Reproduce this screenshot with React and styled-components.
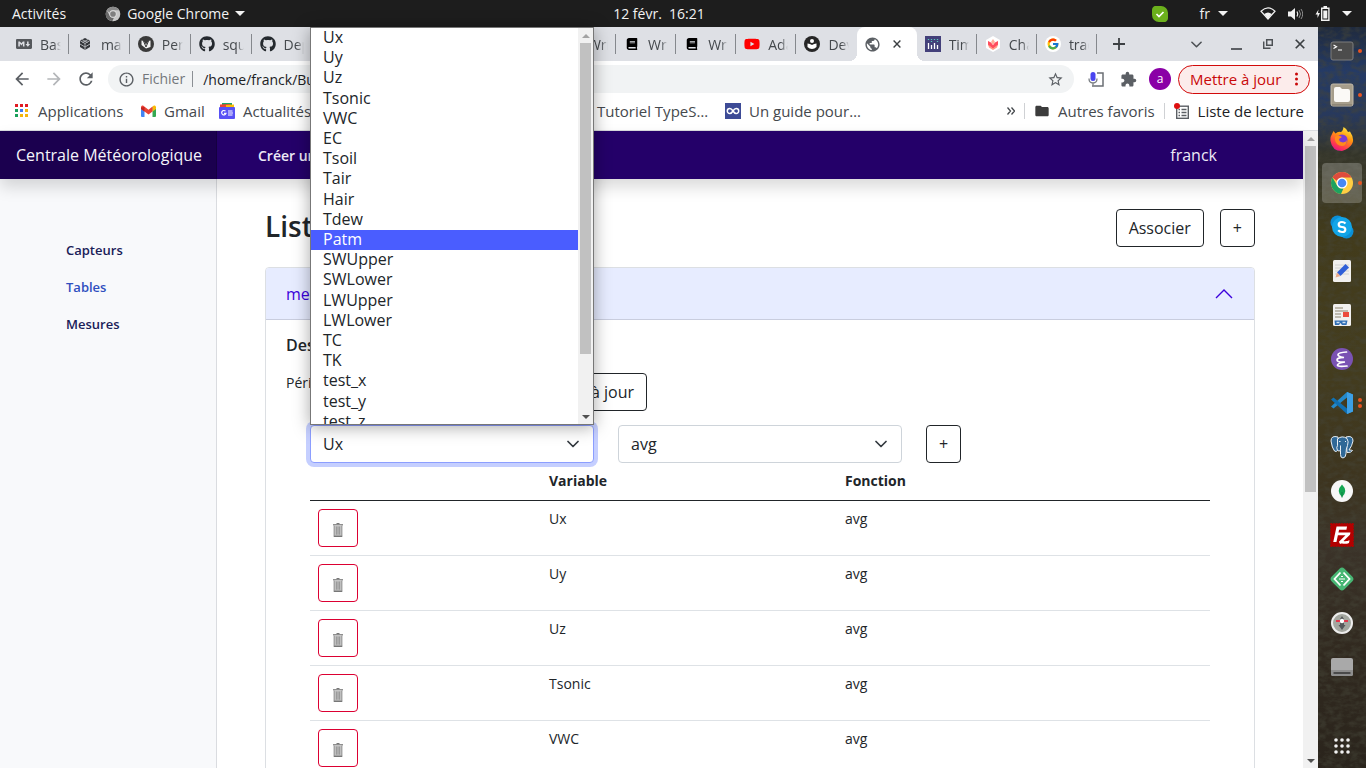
import React from "react";
import styled, { createGlobalStyle, css } from "styled-components";
import { FaMarkdown, FaGithub, FaYoutube, FaBook } from "react-icons/fa";
import { FcGoogle } from "react-icons/fc";
import {
  MdArrowBack,
  MdArrowForward,
  MdRefresh,
  MdInfoOutline,
  MdStarBorder,
  MdExtension,
  MdFolder,
  MdPublic,
} from "react-icons/md";
import { SiFilezilla } from "react-icons/si";

const GlobalStyle = createGlobalStyle`
  *, *::before, *::after { box-sizing: border-box; }
  body { margin: 0; }
  body, button, input, select {
    font-family: "Open Sans", "Noto Sans", sans-serif;
  }
  button { background: none; border: 0; padding: 0; color: inherit; }
  ul { list-style: none; margin: 0; padding: 0; }
  svg { display: block; flex: none; }
`;

/* ---------- desktop ---------- */

const Desktop = styled.div`
  display: flex;
  flex-direction: column;
  height: 100vh;
  overflow: hidden;
  background: #2b261b;
`;

const TopBar = styled.header`
  display: flex;
  align-items: center;
  flex: none;
  height: 27px;
  padding: 0 14px 0 12px;
  background: #1d1d1d;
  color: #f2f2f2;
  font-size: 14px;
  line-height: 20px;
`;

const TopBarLeft = styled.div`
  display: flex;
  align-items: center;
  flex: 1 1 0;
  gap: 39px;
`;

const TopBarButton = styled.button`
  display: flex;
  align-items: center;
  gap: 6px;
  font-size: 14px;
  white-space: nowrap;
`;

const Clock = styled.time`
  margin-right: 46px;
  white-space: pre;
`;

const TopBarRight = styled.div`
  display: flex;
  align-items: center;
  justify-content: flex-end;
  flex: 1 1 0;
  gap: 12px;
`;

const Language = styled.button`
  display: flex;
  align-items: center;
  gap: 8px;
  margin: 0 20px;
  font-size: 14px;
`;

const Workspace = styled.div`
  display: flex;
  flex: 1;
  min-height: 0;
`;

const Browser = styled.div`
  position: relative;
  z-index: 1;
  display: flex;
  flex-direction: column;
  flex: 1;
  min-width: 0;
  background: #fff;
`;

/* ---------- browser chrome ---------- */

const TabStrip = styled.div`
  display: flex;
  flex: none;
  height: 34px;
  padding-left: 8px;
  background: #dee0e5;
`;

const Tabs = styled.div`
  display: flex;
  flex: 1;
  min-width: 0;
`;

const Tab = styled.div`
  position: relative;
  display: flex;
  align-items: center;
  gap: 8px;
  flex: ${(p) => p.$grow} 1 0;
  min-width: 0;
  padding: 0 8px;
  color: #45494d;
  font-size: 14px;
  ${(p) =>
    p.$divided &&
    css`
      &::after {
        content: "";
        position: absolute;
        right: 0;
        top: 7px;
        width: 1px;
        height: 20px;
        background: #85888d;
      }
    `}
  ${(p) =>
    p.$active &&
    css`
      background: #fff;
      border-radius: 8px 8px 0 0;
      &::before,
      &::after {
        content: "";
        position: absolute;
        bottom: 0;
        width: 8px;
        height: 8px;
      }
      &::before {
        right: 100%;
        background: radial-gradient(circle at 0 0, transparent 8px, #fff 8px);
      }
      &::after {
        left: 100%;
        background: radial-gradient(circle at 100% 0, transparent 8px, #fff 8px);
      }
    `}
`;

const TabIcon = styled.span`
  display: flex;
  align-items: center;
  justify-content: center;
  flex: none;
  width: 16px;
  height: 16px;
`;

const TabTitle = styled.span`
  flex: 1;
  min-width: 0;
  overflow: hidden;
  white-space: nowrap;
  mask-image: linear-gradient(to right, #000 65%, transparent);
`;

const TabClose = styled.button`
  display: flex;
  align-items: center;
  justify-content: center;
  width: 16px;
  height: 16px;
  color: #3c4043;
`;

const StripControls = styled.div`
  display: flex;
  align-items: center;
  flex: none;
  width: 221px;
  padding: 0 2px 0 8px;
  color: #3c4043;
`;

const StripButton = styled.button`
  display: flex;
  align-items: center;
  justify-content: center;
  width: ${(p) => (p.$narrow ? 28 : 32)}px;
  height: 28px;
  margin-left: ${(p) => (p.$push ? "auto" : 0)};
  margin-right: ${(p) => (p.$push ? "8px" : 0)};
`;

const Toolbar = styled.div`
  display: flex;
  align-items: center;
  flex: none;
  height: 36px;
  padding: 0 8px 0 6px;
  color: #5b5f64;
`;

const ToolButton = styled.button`
  display: flex;
  align-items: center;
  justify-content: center;
  width: 32px;
  height: 28px;
  color: ${(p) => (p.$dim ? "#b4b6b9" : "#5b5f64")};
`;

const AddressBar = styled.div`
  display: flex;
  align-items: center;
  flex: 1;
  height: 28px;
  margin: 0 6px;
  padding: 0 10px;
  border-radius: 14px;
  background: #f1f3f4;
  font-size: 14px;
`;

const Scheme = styled.span`
  margin: 0 7px;
  padding-right: 7px;
  border-right: 1px solid #8b8f94;
  line-height: 16px;
  color: #73777b;
`;

const AddressInput = styled.input`
  flex: 1;
  min-width: 0;
  border: 0;
  padding: 0 3px;
  background: none;
  color: #202124;
  font-size: 14px;
  outline: none;
`;

const Avatar = styled.button`
  width: 22px;
  height: 22px;
  margin: 0 7px 0 5px;
  border-radius: 50%;
  background: #8a00a6;
  color: #fff;
  font-size: 12px;
  line-height: 20px;
`;

const UpdateButton = styled.button`
  display: flex;
  align-items: center;
  justify-content: space-between;
  width: 132px;
  height: 29px;
  padding: 0 11px;
  border: 1px solid #d20a0a;
  border-radius: 15px;
  background: #fceceb;
  color: #c90808;
  font-size: 15px;
  white-space: nowrap;
`;

const BookmarkBar = styled.nav`
  display: flex;
  align-items: center;
  flex: none;
  height: 34px;
  padding: 0 14px 5px;
  border-bottom: 1px solid #dadce0;
`;

const Bookmark = styled.a`
  display: flex;
  align-items: center;
  gap: 8px;
  flex: none;
  width: ${(p) => (p.$width ? p.$width + "px" : "auto")};
  color: ${(p) => (p.$dark ? "#202124" : "#45494d")};
  font-size: 15px;
  line-height: 20px;
  text-decoration: none;
  white-space: nowrap;
`;

const BookmarkEnd = styled.div`
  display: flex;
  align-items: center;
  gap: 9px;
  margin-left: auto;
  color: #45494d;
`;

const Separator = styled.span`
  width: 1px;
  height: 16px;
  background: #cfd1d4;
`;

/* ---------- page ---------- */

const Viewport = styled.div`
  display: flex;
  flex: 1;
  min-height: 0;
`;

const Page = styled.div`
  display: flex;
  flex-direction: column;
  flex: 1;
  min-width: 0;
  color: #212529;
`;

const PageHeader = styled.header`
  position: relative;
  z-index: 1;
  display: flex;
  align-items: center;
  flex: none;
  height: 48px;
  background: #240069;
  box-shadow: 0 8px 16px rgba(0, 0, 0, 0.15);
`;

const Brand = styled.a`
  display: flex;
  align-items: center;
  flex: none;
  width: 217px;
  height: 48px;
  padding-left: 16px;
  background: #1b004f;
  box-shadow: inset -1px 0 0 #150040;
  color: #f5f4fa;
  font-size: 16px;
  text-decoration: none;
  white-space: nowrap;
`;

const HeaderLink = styled.a`
  margin: ${(p) => (p.$end ? "0 86px 0 auto" : "0 0 0 41px")};
  color: #eceaf6;
  font-size: ${(p) => (p.$end ? 16 : 14)}px;
  font-weight: ${(p) => (p.$end ? 400 : 600)};
  text-decoration: none;
`;

const Columns = styled.div`
  display: flex;
  flex: 1;
  min-height: 0;
`;

const Sidebar = styled.nav`
  display: flex;
  flex-direction: column;
  gap: 16px;
  flex: none;
  width: 217px;
  padding: 61px 16px 0 66px;
  border-right: 1px solid #dadce0;
  background: #f8f9fb;
`;

const SideLink = styled.a`
  color: ${(p) => (p.$active ? "#2f4fbf" : "#1a2058")};
  font-size: 13px;
  font-weight: 600;
  line-height: 21px;
  text-decoration: none;
`;

const Main = styled.main`
  flex: 1;
  min-width: 0;
  padding: 30px 48px 0;
`;

const TitleRow = styled.div`
  display: flex;
  align-items: flex-start;
  gap: 16px;
  margin-bottom: 20px;
`;

const Title = styled.h1`
  flex: 1;
  margin: 0;
  font-size: 28px;
  font-weight: 600;
  line-height: 34px;
`;

const OutlineButton = styled.button`
  height: 38px;
  padding: 0 12px;
  border: 1px solid ${(p) => (p.$danger ? "#dc0032" : "#212529")};
  border-radius: 4px;
  background: #fff;
  color: #212529;
  font-size: 16px;
  white-space: nowrap;
`;

const IconButton = styled(OutlineButton)`
  display: flex;
  align-items: center;
  justify-content: center;
  width: 40px;
  padding: 4px 0 0;
`;

const Accordion = styled.section`
  border: 1px solid #dcdfe3;
  border-radius: 4px;
`;

const AccordionHeader = styled.button`
  display: flex;
  align-items: center;
  justify-content: space-between;
  width: 100%;
  height: 52px;
  padding: 0 21px 0 20px;
  border-bottom: 1px solid #c9cdde;
  border-radius: 3px 3px 0 0;
  background: #e7ecff;
  color: #3c00dc;
  font-size: 16px;
`;

const AccordionBody = styled.div`
  padding: 16px 20px;
`;

const SubTitle = styled.h2`
  margin: 0 0 19px;
  font-size: 16px;
  font-weight: 600;
  line-height: 18px;
`;

const PeriodForm = styled.form`
  display: flex;
  align-items: flex-start;
  gap: 12px;
  width: 361px;
  margin-bottom: 14px;
  font-size: 14px;
  line-height: 20px;
`;

const PeriodInput = styled.input`
  flex: 1;
  min-width: 0;
  height: 38px;
  padding: 0 12px;
  border: 1px solid #ced4da;
  border-radius: 4px;
  font-size: 16px;
`;

const Indent = styled.div`
  padding: 0 24px;
`;

const FieldGrid = styled.div`
  display: grid;
  grid-template-columns: repeat(3, 1fr);
  gap: 24px;
  justify-items: start;
`;

const SelectField = styled.div`
  position: relative;
  width: 100%;
  & > svg {
    position: absolute;
    right: 15px;
    top: 13px;
    pointer-events: none;
  }
`;

const Select = styled.select`
  display: block;
  width: 100%;
  height: 38px;
  padding: 0 12px;
  appearance: none;
  border: 1px solid ${(p) => (p.$focused ? "#8c9eff" : "#ced4da")};
  border-radius: 4px;
  background: #fff;
  box-shadow: ${(p) => (p.$focused ? "0 0 0 4px #c5cfff" : "none")};
  color: #212529;
  font-size: 16px;
  outline: none;
`;

const Popup = styled.div`
  position: absolute;
  left: 0;
  right: 0;
  bottom: 100%;
  z-index: 10;
  display: flex;
  height: 398px;
  overflow: hidden;
  border: 1px solid #777;
  background: #fff;
  box-shadow: 0 2px 16px rgba(0, 0, 0, 0.35);
`;

const OptionList = styled.ul`
  display: flex;
  flex-direction: column;
  flex: 1;
  height: 404px;
`;

const Option = styled.li`
  flex: 1 1 0;
  padding: 0 12px;
  background: ${(p) => (p.$selected ? "#4a5dff" : "#fff")};
  color: ${(p) => (p.$selected ? "#fff" : "#212529")};
  font-size: 16px;
  line-height: 19px;
`;

const ScrollTrack = styled.div`
  display: flex;
  flex-direction: column;
  flex: none;
  width: 15px;
  background: #f1f1f1;
`;

const ScrollArrow = styled.span`
  display: flex;
  align-items: center;
  justify-content: center;
  height: 15px;
  flex: none;
`;

const ScrollRun = styled.div`
  flex: 1;
  min-height: 0;
  padding: 0 2px;
`;

const ScrollThumb = styled.div`
  height: ${(p) => p.$size}%;
  background: #c1c1c1;
`;

const Table = styled.table`
  width: 100%;
  table-layout: fixed;
  border-collapse: separate;
  border-spacing: 0;
  font-size: 14px;
  line-height: 19px;
`;

const HeadCell = styled.th`
  width: ${(p) => (p.$width ? p.$width + "px" : "auto")};
  height: 38px;
  padding: 8px;
  border-bottom: 1px solid #212529;
  text-align: left;
  vertical-align: top;
  font-weight: 700;
`;

const Cell = styled.td`
  height: 55px;
  padding: 8px;
  border-bottom: 1px solid #dee2e6;
  vertical-align: top;
`;

/* ---------- dock ---------- */

const Dock = styled.aside`
  position: relative;
  display: flex;
  flex-direction: column;
  flex: none;
  width: 48px;
  padding-top: 2px;
  background: linear-gradient(
    #1f2a3e 0,
    #253b66 6%,
    #28395c 12%,
    #34352a 17%,
    #423b1b 28%,
    #443d1e 45%,
    #3d341f 62%,
    #3b3329 70%,
    #322a20 82%,
    #2a241c 100%
  );
`;

const Grain = styled.svg`
  position: absolute;
  inset: 0;
  width: 100%;
  height: 100%;
  opacity: 0.5;
`;

const DockItem = styled.button`
  position: relative;
  display: flex;
  align-items: center;
  justify-content: center;
  flex: none;
  height: 40px;
  margin: 2px 4px;
  margin-top: ${(p) => (p.$last ? "auto" : "2px")};
  border-radius: 4px;
  background: ${(p) => (p.$active ? "rgba(255,255,255,0.22)" : "none")};
`;

const Dots = styled.span`
  position: absolute;
  right: 0;
  top: 0;
  bottom: 0;
  display: flex;
  flex-direction: column;
  justify-content: center;
  gap: 2px;
  &::before,
  &::after {
    content: "";
    width: 4px;
    height: 4px;
    border-radius: 50%;
    background: #e95420;
  }
  &::after {
    display: ${(p) => (p.$count > 1 ? "block" : "none")};
  }
`;

/* ---------- drawings ---------- */

const Caret = ({ size = 10, color = "#f2f2f2", up }) => (
  <svg width={size} height={size / 2} viewBox="0 0 10 5">
    <path d={up ? "M0 5h10L5 0z" : "M0 0h10L5 5z"} fill={color} />
  </svg>
);

const Chevron = ({ color = "#343a40", w = 12 }) => (
  <svg width={w} height={w} viewBox="0 0 12 12" fill="none">
    <path d="M1 3.500l5 5 5-5" stroke={color} strokeWidth="1.700" strokeLinecap="round" strokeLinejoin="round" />
  </svg>
);

const Cross = ({ size = 8 }) => (
  <svg width={size} height={size} viewBox="0 0 8 8">
    <path d="M.6.6l6.800 6.800M7.400.6L.6 7.400" stroke="currentColor" strokeWidth="1.400" />
  </svg>
);

const ChromeLogo = ({ size, gray }) => {
  const c = gray ? ["#8a8a8a", "#6a6a6a", "#c9c9c9", "#808080", "#ddd"] : ["#dd4b3e", "#1da260", "#ffce43", "#4688f4", "#fff"];
  return (
    <svg width={size} height={size} viewBox="0 0 48 48">
      <circle cx="24" cy="24" r="22" fill={c[2]} />
      <path d="M24 2a22 22 0 0 1 19 11H24a11 11 0 0 0-10 7L5 13A22 22 0 0 1 24 2z" fill={c[0]} />
      <path d="M5 13l9.500 16.500a11 11 0 0 0 12.500 5L22 46A22 22 0 0 1 5 13z" fill={c[1]} />
      <circle cx="24" cy="24" r="11" fill={c[4]} />
      <circle cx="24" cy="24" r="8.500" fill={c[3]} />
    </svg>
  );
};

const Cube = () => (
  <svg width="14" height="14" viewBox="0 0 14 14">
    <path d="M7 1l5 2.500v6.500L7 13 2 10V3.500z" fill="#33363a" />
    <path d="M2 3.500l5 3 5-3M7 6.500V13M4 2.500l5.500 3M10 2.500l-5.500 3M2 7l5 3 5-3" stroke="#b9bbc0" strokeWidth=".900" fill="none" />
  </svg>
);

const RoundMark = () => (
  <svg width="16" height="16" viewBox="0 0 16 16">
    <circle cx="8" cy="8" r="8" fill="#3a3a3a" />
    <path d="M3.500 4.500L5.500 5 8 8.500 10.500 5l2-.500V11L8 12.500 3.500 9z" fill="#f2f2f2" />
    <path d="M5.500 5L8 11l2.500-6" stroke="#3a3a3a" fill="none" />
  </svg>
);

const Reader = () => (
  <svg width="16" height="16" viewBox="0 0 16 16">
    <circle cx="8" cy="8" r="8" fill="#262626" />
    <circle cx="8" cy="5" r="2" fill="#fff" />
    <path d="M3.500 7.500Q6 7.500 8 9q2-1.500 4.500-1.500V11Q10.500 13 8 13t-4.500-2z" fill="#fff" />
  </svg>
);

const Chart = () => (
  <svg width="16" height="16" viewBox="0 0 16 16">
    <path d="M0 0h16v16H0z" fill="#43407a" />
    <path d="M3.500 7v6M6.500 9v4M9.500 7v6M12.500 9v4" stroke="#fff" strokeWidth="1.300" />
    <path d="M3.500 3v2M6.500 3v4M9.500 3v2M12.500 3v4" stroke="#59c9bd" strokeWidth="1.300" strokeDasharray="1 1" />
  </svg>
);

const Challenge = () => (
  <svg width="16" height="16" viewBox="0 0 16 16">
    <path d="M8 0l7 4v8l-7 4-7-4V4z" fill="#fff" />
    <path d="M3 5l3 1.500L8 9l2-2.500L13 5v4l-5 4-5-4z" fill="#ff4d5e" />
    <path d="M3 8.500l5 4 5-4-1 3-4 2.500-4-2.500z" fill="#ff9a85" />
    <path d="M6 6l2-3 2 3-2 3z" fill="#ffb09c" />
  </svg>
);

const GoogleTab = () => (
  <svg width="16" height="16" viewBox="0 0 16 16">
    <circle cx="8" cy="8" r="8" fill="#fff" />
    <g transform="translate(1.500 1.500)">
      <FcGoogle size={13} />
    </g>
  </svg>
);

const AppsGrid = () => (
  <svg width="16" height="14" viewBox="0 0 16 14">
    {["#e11b22", "#e11b22", "#e11b22", "#18a05a", "#3f7bf2", "#f5b60a", "#18a05a", "#f5b60a", "#f5b60a"].map((c, i) => (
      <rect key={i} x={1 + (i % 3) * 5} y={Math.floor(i / 3) * 5} width="3" height="3" fill={c} />
    ))}
  </svg>
);

const Gmail = () => (
  <svg width="15" height="12" viewBox="0 0 15 12">
    <path d="M0 2h3.500v10H1q-1 0-1-1z" fill="#4285f4" />
    <path d="M11.500 2H15v9q0 1-1 1h-2.500z" fill="#34a853" />
    <path d="M11.500 1.500L13 .500q2-.500 2 2V4l-3.500 2.600z" fill="#fbbc04" />
    <path d="M0 4V2.500Q0 0 2 .500l5.500 4.200 4-3.200v5.100l-4 3-4-3z" fill="#ea4335" />
    <path d="M0 2.500V4l3.500 2.600V2z" fill="#c5221f" />
  </svg>
);

const News = () => (
  <svg width="16" height="16" viewBox="0 0 16 16">
    <path d="M3 0h10v4H3z" fill="#1fa463" />
    <path d="M1 1.500l10-.500 3 3H1z" fill="#ea4335" />
    <path d="M7 2l8-.500V5H7z" fill="#fbbc04" />
    <rect y="4" width="16" height="12" rx="1" fill="#5851f5" />
    <path d="M6.500 8.200A2.200 2.200 0 1 0 7 10.300H5M9 8h4.500M9 10h5M9 12h4.500" stroke="#fff" strokeWidth="1.200" fill="none" />
  </svg>
);

const LoopLogo = () => (
  <svg width="16" height="16" viewBox="0 0 16 16">
    <path d="M0 0h16v16H0z" fill="#3d4b96" />
    <path d="M8 8C6.500 5.500 5.500 5.500 4.800 5.500a2.500 2.500 0 0 0 0 5C5.500 10.500 6.500 10.500 8 8s2.500-2.500 3.200-2.500a2.500 2.500 0 0 1 0 5C10.500 10.500 9.500 10.500 8 8z" stroke="#fff" strokeWidth="1.500" fill="none" />
  </svg>
);

const ReadingList = () => (
  <svg width="16" height="17" viewBox="1 0 16 17">
    <rect x="3.700" y="3.200" width="11.600" height="12.100" fill="none" stroke="#5b5f64" strokeWidth="1.400" />
    <path d="M5.500 6.500h1.500M5.500 9.500h1.500M5.500 12.500h1.500M8.500 6.500h5M8.500 9.500h5M8.500 12.500h5" stroke="#5b5f64" strokeWidth="1.300" />
    <circle cx="4" cy="3" r="3" fill="#de0f0f" />
  </svg>
);

const VoicePad = () => (
  <svg width="16" height="17" viewBox="0 0 16 17">
    <path d="M9 2h6v13H4" fill="none" stroke="#6b6f74" strokeWidth="1.500" />
    <rect x="2.500" y="1" width="5" height="9" rx="2.500" fill="#4a45f0" />
    <path d="M1 7.500Q1 12 5 12t4-4.500M5 12v2.500" fill="none" stroke="#7a7e83" strokeWidth="1.300" />
  </svg>
);

const Trash = () => (
  <svg width="10" height="14" viewBox="0 0 10 14">
    <path d="M3.500 0h3v1.200h-3z" fill="#777" />
    <path d="M0 1h10v1.500H0z" fill="#8f8f8f" />
    <path d="M.700 2.500h8.600v10.200H.700z" fill="#c4c4c4" />
    <path d="M1.200 2.500v10.200M3.400 3.500v8.200M5 3.500v8.200M6.600 3.500v8.200M8.800 2.500v10.200" stroke="#8a8a8a" strokeWidth=".800" />
    <path d="M.700 12.500h8.600V14H.700z" fill="#777" />
  </svg>
);

const SkypeStatus = () => (
  <svg width="16" height="16" viewBox="0 0 16 16">
    <path d="M0 4a4 4 0 0 1 5-4h4a7 7 0 0 1 7 7v5a4 4 0 0 1-5 4H7a7 7 0 0 1-7-7z" fill="#6bb01c" />
    <path d="M4.500 8l2.500 2.500L11.500 6" stroke="#fff" strokeWidth="1.700" fill="none" />
  </svg>
);

const Wifi = () => (
  <svg width="16" height="13" viewBox="0 0 16 13">
    <path d="M1 4.200Q8-2.500 15 4.200L8 12z" fill="none" stroke="#f2f2f2" strokeWidth="1.200" />
    <path d="M4.200 7Q8 4 11.800 7L8 12z" fill="#f2f2f2" />
  </svg>
);

const Speaker = () => (
  <svg width="15" height="12" viewBox="0 0 15 12">
    <path d="M0 3.500h3L7 0v12L3 8.500H0z" fill="#f2f2f2" />
    <path d="M9 3.500q1.500 2.500 0 5" stroke="#f2f2f2" fill="none" strokeWidth="1.200" />
    <path d="M11 2q3 4 0 8M13 1q3.500 5 0 10" stroke="#8d8d8d" fill="none" />
  </svg>
);

const Battery = () => (
  <svg width="15" height="15" viewBox="0 0 15 15">
    <path d="M3.500 3.500L.500 8.500h2v3.500L5 7H3z" fill="#f2f2f2" />
    <path d="M6.700 2.200h7.200v12H6.700zM8.500.700h3.500" fill="none" stroke="#f2f2f2" strokeWidth="1.400" />
    <path d="M8.300 4.500h4v8h-4z" fill="#f2f2f2" />
  </svg>
);

const Terminal = () => (
  <svg width="24" height="20" viewBox="0 0 24 20">
    <rect x="1" y="1" width="22" height="18" rx="2" fill="#4c4c4c" stroke="#7c7c7c" />
    <path d="M3.500 4l3 1.700-3 1.700M8 9h4" stroke="#fff" fill="none" strokeWidth="1.200" />
  </svg>
);

const Files = () => (
  <svg width="24" height="24" viewBox="0 0 24 24">
    <rect x="1" y="1" width="22" height="22" rx="2" fill="#a69d8b" stroke="#c2b9a8" />
    <path d="M4 6q0-2 2-2h4l2 2h6q2 0 2 2v9q0 2-2 2H6q-2 0-2-2z" fill="#fbf9f6" />
    <path d="M2 22h20" stroke="#7b7365" />
  </svg>
);

const Firefox = () => (
  <svg width="24" height="24" viewBox="0 0 24 24">
    <defs>
      <linearGradient id="fx" x1=".8" y1="0" x2=".3" y2="1">
        <stop offset="0" stopColor="#fff04a" />
        <stop offset=".4" stopColor="#ff980e" />
        <stop offset=".8" stopColor="#ff3750" />
        <stop offset="1" stopColor="#e31587" />
      </linearGradient>
    </defs>
    <path d="M2 7l1.500-3 2 2.500Q8 4 11 5q2-1 2.500-5 3 1.500 4.500 5l2-.500Q25 12 22 17t-10 7Q2 24 .500 14 0 10 2 7z" fill="url(#fx)" />
    <circle cx="12" cy="13" r="5.500" fill="#7a3bd6" />
    <path d="M5 10q3-2.500 7 0l-3 2q0 3 4 3.500 3-.500 4-2.500Q16.500 19 12 19q-6-.500-7-6z" fill="#ff8a1c" />
  </svg>
);

const Skype = () => (
  <svg width="24" height="24" viewBox="0 0 24 24">
    <circle cx="7.500" cy="7.500" r="7" fill="#0b8fd6" />
    <circle cx="16.500" cy="16.500" r="7" fill="#0b8fd6" />
    <circle cx="12" cy="12" r="10" fill="#12a5e8" />
    <path d="M15.500 8.500Q14 7 12 7q-3.300 0-3.300 2.500T12 12t3.300 2.600T12 17q-2.300 0-3.800-1.700" fill="none" stroke="#fff" strokeWidth="2.200" />
  </svg>
);

const Editor = () => (
  <svg width="20" height="24" viewBox="0 0 20 24">
    <rect x="1" y="1" width="18" height="22" rx="1.500" fill="#f1f0ef" />
    <path d="M3 6h14M3 9h14M3 12h14M3 15h14" stroke="#d2d2d2" />
    <path d="M13.500 5l3.500 3.500-8.500 8.500L5 13.500z" fill="#2f5fd8" />
    <path d="M5 13.500L8.500 17 3.500 18.500z" fill="#e9a98b" />
  </svg>
);

const DocViewer = () => (
  <svg width="20" height="24" viewBox="0 0 20 24">
    <rect x="1" y="1" width="18" height="22" rx="1.500" fill="#f1f0ef" />
    <path d="M3 5h8M3 8h13M3 11h6M3 14h6" stroke="#8d8470" strokeWidth="1.200" />
    <rect x="11" y="9" width="6" height="5" fill="#ec4b3d" />
    <path d="M2.500 17.500h13l-1 4.500h-4.500l-1.500-2-1.500 2H3z" fill="#2f6eb5" />
    <path d="M4.500 19.500h3M10.500 19.500h3" stroke="#cfe0f2" strokeWidth="1.300" />
  </svg>
);

const Emacs = () => (
  <svg width="24" height="24" viewBox="0 0 24 24">
    <circle cx="12" cy="12" r="11" fill="#7a52b3" />
    <path d="M16.500 5Q8.500 5.500 8 7.500t6 3q-7 0-7 2.500t8 2Q8 16 7.500 18t9.500 1" fill="none" stroke="#fff" strokeWidth="1.700" strokeLinecap="round" />
  </svg>
);

const Code = () => (
  <svg width="24" height="24" viewBox="0 0 24 24">
    <path d="M17 1l6 2.500v17L17 23V6.500L3.500 17.500 1 15.500z" fill="#2489ca" />
    <path d="M1 8.500l2.500-2L17 17.500V23z" fill="#1070b3" />
    <path d="M17 1l6 2.500v17L17 23z" fill="#3c9fe6" />
  </svg>
);

const Postgres = () => (
  <svg width="24" height="24" viewBox="0 0 24 24" fill="#2f6897" stroke="#e8eef3" strokeLinejoin="round">
    <path d="M8 2Q1 0 1 6q1 7 3.500 10 1.500 1.500 3.500-1z" />
    <path d="M16 2q7-2 7 4-1 5-4 9 3 0 3.500.500-1.500 2.500-5.500 2z" />
    <path d="M7.500 4Q12 0 17 3.500q2 3 .500 7-1.500 3-1.500 8 0 4-3 4.500-2.500 0-2.500-3.500v-4q-1.500 1-3 0-1.500-3 0-5z" />
    <path d="M10.500 15.500v-5M9 6.500h1.500M15 6.500h1" fill="none" />
  </svg>
);

const Mongo = () => (
  <svg width="22" height="22" viewBox="0 0 22 22">
    <circle cx="11" cy="11" r="11" fill="#f7f7f7" />
    <path d="M11 4.500q6.500 6.500 0 12.500-6.500-6 0-12.500z" fill="#13a552" />
    <path d="M11 12v5.500" stroke="#0d8040" />
  </svg>
);

const FileZillaTile = styled.span`
  display: flex;
  align-items: center;
  justify-content: center;
  width: 22px;
  height: 22px;
  background: #fff;
`;

const FileZilla = () => (
  <FileZillaTile>
    <SiFilezilla size={24} color="#b30000" />
  </FileZillaTile>
);

const CodeDiamond = () => (
  <svg width="24" height="24" viewBox="0 0 24 24">
    <rect x="3" y="3" width="18" height="18" rx="3.500" fill="#48b674" transform="rotate(45 12 12)" />
    <path d="M10.500 5.500L4.500 12l6 6.500M13.500 5.500l6 6.500-6 6.500" fill="none" stroke="#fff" strokeWidth="1.800" />
    <path d="M9 12h6M11 9.500h2M11 14.500h2" stroke="#fff" strokeWidth="1.200" />
  </svg>
);

const Drone = () => (
  <svg width="24" height="24" viewBox="0 0 24 24">
    <circle cx="12" cy="12" r="10" fill="#a3a69f" stroke="#ededed" strokeWidth="2" />
    <path d="M12 5l2 3v6h1.500L12 19l-3.500-5H10V8z" fill="#55585a" />
    <path d="M6 10h12" stroke="#e0354a" strokeWidth="2" />
    <circle cx="12" cy="10" r="2.200" fill="#fff" />
  </svg>
);

const Drive = () => (
  <svg width="24" height="20" viewBox="0 0 24 20">
    <rect x="1" y="1" width="22" height="18" rx="2" fill="#a9a9a9" />
    <path d="M1 13h22v4q0 2-2 2H3q-2 0-2-2z" fill="#8e8e8e" />
    <path d="M3.500 16h17" stroke="#4a4a4a" strokeWidth="2" />
  </svg>
);

const AllApps = () => (
  <svg width="16" height="16" viewBox="0 0 16 16">
    {[...Array(9)].map((_, i) => (
      <circle key={i} cx={2 + (i % 3) * 6} cy={2 + Math.floor(i / 3) * 6} r="1.800" fill="#f2f2f2" />
    ))}
  </svg>
);

/* ---------- data ---------- */

const github = <FaGithub size={16} color="#24292e" />;
const book = <FaBook size={12} color="#000" />;

const TABS = [
  { title: "Base", icon: <FaMarkdown size={16} color="#55585c" /> },
  { title: "matplotlib", icon: <Cube /> },
  { title: "Personnel", icon: <RoundMark /> },
  { title: "squelette", icon: github },
  { title: "Deploy", icon: github },
  { title: "Docs", icon: book },
  { title: "Docs", icon: book },
  { title: "Docs", icon: book },
  { title: "Docs", icon: book },
  { title: "Writing", icon: book },
  { title: "Writing", icon: book },
  { title: "Writing", icon: book },
  { title: "Adapter", icon: <FaYoutube size={16} color="#f00" /> },
  { title: "Devenir", icon: <Reader />, beforeActive: true },
  { title: "", icon: <MdPublic size={17} color="#5b5f64" />, active: true },
  { title: "Time series", icon: <Chart /> },
  { title: "Charts", icon: <Challenge /> },
  { title: "traduction", icon: <GoogleTab /> },
];

const OPTIONS = [
  "Ux", "Uy", "Uz", "Tsonic", "VWC", "EC", "Tsoil", "Tair", "Hair", "Tdew",
  "Patm", "SWUpper", "SWLower", "LWUpper", "LWLower", "TC", "TK", "test_x", "test_y", "test_z",
];

const ROWS = ["Ux", "Uy", "Uz", "Tsonic", "VWC"];

const DOCK = [
  { name: "Terminal", icon: <Terminal />, dots: 1 },
  { name: "Fichiers", icon: <Files />, dots: 1 },
  { name: "Firefox", icon: <Firefox /> },
  { name: "Google Chrome", icon: <ChromeLogo size={24} />, dots: 1, active: true },
  { name: "Skype", icon: <Skype /> },
  { name: "Éditeur de texte", icon: <Editor /> },
  { name: "Visionneur de documents", icon: <DocViewer /> },
  { name: "Emacs", icon: <Emacs /> },
  { name: "Visual Studio Code", icon: <Code />, dots: 2 },
  { name: "PostgreSQL", icon: <Postgres /> },
  { name: "MongoDB", icon: <Mongo /> },
  { name: "FileZilla", icon: <FileZilla /> },
  { name: "Éditeur de code", icon: <CodeDiamond /> },
  { name: "QGroundControl", icon: <Drone /> },
  { name: "Disque", icon: <Drive /> },
];

const Scrollbar = ({ size }) => (
  <ScrollTrack aria-hidden="true">
    <ScrollArrow><Caret size={8} color="#a3a3a3" up /></ScrollArrow>
    <ScrollRun><ScrollThumb $size={size} /></ScrollRun>
    <ScrollArrow><Caret size={8} color="#505050" /></ScrollArrow>
  </ScrollTrack>
);

export default function App() {
  return (
    <Desktop>
      <GlobalStyle />
      <TopBar>
        <TopBarLeft>
          <TopBarButton>Activités</TopBarButton>
          <TopBarButton>
            <ChromeLogo size={16} gray />
            Google Chrome
            <Caret />
          </TopBarButton>
        </TopBarLeft>
        <Clock>{"12 févr.  16:21"}</Clock>
        <TopBarRight>
          <SkypeStatus />
          <Language>fr <Caret /></Language>
          <Wifi />
          <Speaker />
          <Battery />
          <Caret />
        </TopBarRight>
      </TopBar>

      <Workspace>
        <Browser>
          <TabStrip>
            <Tabs>
              {TABS.map((t, i) => (
                <Tab key={i} $grow={i < 9 ? 61 : 60} $active={t.active} $divided={!t.active && !t.beforeActive}>
                  <TabIcon>{t.icon}</TabIcon>
                  {t.active ? (
                    <TabClose aria-label="Fermer l’onglet"><Cross /></TabClose>
                  ) : (
                    <TabTitle>{t.title}</TabTitle>
                  )}
                </Tab>
              ))}
            </Tabs>
            <StripControls>
              <StripButton $narrow aria-label="Nouvel onglet">
                <svg width="12" height="12" viewBox="0 0 12 12"><path d="M6 0v12M0 6h12" stroke="currentColor" strokeWidth="1.800" /></svg>
              </StripButton>
              <StripButton $push aria-label="Rechercher des onglets"><Chevron color="#4d5155" w={11} /></StripButton>
              <StripButton aria-label="Réduire">
                <svg width="11" height="11" viewBox="0 0 11 11"><path d="M0 10h11" stroke="#4d5155" strokeWidth="1.800" /></svg>
              </StripButton>
              <StripButton aria-label="Restaurer">
                <svg width="10" height="10" viewBox="0 0 10 10" fill="none" stroke="#4d5155" strokeWidth="1.500">
                  <path d="M3.700.700h5.600v5.600H3.700zM.700 2.500v6.800H7.500" />
                </svg>
              </StripButton>
              <StripButton aria-label="Fermer"><Cross size={10} /></StripButton>
            </StripControls>
          </TabStrip>

          <Toolbar>
            <ToolButton aria-label="Retour"><MdArrowBack size={20} /></ToolButton>
            <ToolButton $dim aria-label="Avancer"><MdArrowForward size={20} /></ToolButton>
            <ToolButton aria-label="Actualiser"><MdRefresh size={20} /></ToolButton>
            <AddressBar>
              <MdInfoOutline size={17} />
              <Scheme>Fichier</Scheme>
              <AddressInput aria-label="Adresse" defaultValue="/home/franck/Bureau/centrale/tables.html" />
              <MdStarBorder size={17} />
            </AddressBar>
            <ToolButton aria-label="Saisie vocale"><VoicePad /></ToolButton>
            <ToolButton aria-label="Extensions"><MdExtension size={17} /></ToolButton>
            <Avatar aria-label="Profil">a</Avatar>
            <UpdateButton>
              Mettre à jour
              <svg width="3" height="14" viewBox="0 0 3 14" fill="currentColor">
                <circle cx="1.500" cy="2" r="1.500" /><circle cx="1.500" cy="7" r="1.500" /><circle cx="1.500" cy="12" r="1.500" />
              </svg>
            </UpdateButton>
          </Toolbar>

          <BookmarkBar>
            <Bookmark href="#" $width={127}><AppsGrid />Applications</Bookmark>
            <Bookmark href="#" $width={78}><Gmail />Gmail</Bookmark>
            <Bookmark href="#" $width={116}><News />Actualités</Bookmark>
            <Bookmark href="#" $width={118}><FaYoutube size={16} color="#f00" />YouTube</Bookmark>
            <Bookmark href="#" $width={120}><MdPublic size={16} />Maps</Bookmark>
            <Bookmark href="#" $width={152}><MdPublic size={16} />Tutoriel TypeS…</Bookmark>
            <Bookmark href="#"><LoopLogo />Un guide pour…</Bookmark>
            <BookmarkEnd>
              <svg width="8" height="8" viewBox="0 0 8 8" fill="none" stroke="currentColor" strokeWidth="1.300"><path d="M.500.500L3.500 4l-3 3.500M4.500.500L7.500 4l-3 3.500" /></svg>
              <Separator />
              <Bookmark href="#"><MdFolder size={16} color="#3c3c3c" />Autres favoris</Bookmark>
              <Separator />
              <Bookmark href="#" $dark><ReadingList />Liste de lecture</Bookmark>
            </BookmarkEnd>
          </BookmarkBar>

          <Viewport>
            <Page>
              <PageHeader>
                <Brand href="#">Centrale Météorologique</Brand>
                <HeaderLink href="#">Créer un capteur</HeaderLink>
                <HeaderLink href="#" $end>franck</HeaderLink>
              </PageHeader>
              <Columns>
                <Sidebar>
                  <SideLink href="#">Capteurs</SideLink>
                  <SideLink href="#" $active>Tables</SideLink>
                  <SideLink href="#">Mesures</SideLink>
                </Sidebar>
                <Main>
                  <TitleRow>
                    <Title>Liste des tables</Title>
                    <OutlineButton>Associer</OutlineButton>
                    <OutlineButton>+</OutlineButton>
                  </TitleRow>
                  <Accordion>
                    <AccordionHeader>
                      mesures
                      <svg width="18" height="10" viewBox="0 0 18 10"><path d="M1 9l8-8 8 8" fill="none" stroke="currentColor" strokeWidth="1.400" /></svg>
                    </AccordionHeader>
                    <AccordionBody>
                      <SubTitle>Description</SubTitle>
                      <PeriodForm>
                        <label htmlFor="period">Période</label>
                        <PeriodInput id="period" type="text" />
                        <OutlineButton type="button">Mettre à jour</OutlineButton>
                      </PeriodForm>
                      <Indent>
                        <FieldGrid>
                          <SelectField>
                            <Select $focused aria-label="Variable" defaultValue="Ux">
                              {OPTIONS.map((o) => <option key={o}>{o}</option>)}
                            </Select>
                            <Chevron />
                            <Popup>
                              <OptionList role="listbox" aria-label="Variables">
                                {OPTIONS.map((o) => (
                                  <Option key={o} role="option" aria-selected={o === "Patm"} $selected={o === "Patm"}>{o}</Option>
                                ))}
                              </OptionList>
                              <Scrollbar size={85} />
                            </Popup>
                          </SelectField>
                          <SelectField>
                            <Select aria-label="Fonction" defaultValue="avg">
                              <option>avg</option>
                            </Select>
                            <Chevron />
                          </SelectField>
                          <OutlineButton>+</OutlineButton>
                        </FieldGrid>
                        <Table>
                          <thead>
                            <tr>
                              <HeadCell $width={231} aria-label="Actions" />
                              <HeadCell $width={296}>Variable</HeadCell>
                              <HeadCell>Fonction</HeadCell>
                            </tr>
                          </thead>
                          <tbody>
                            {ROWS.map((v) => (
                              <tr key={v}>
                                <Cell>
                                  <IconButton $danger aria-label={"Supprimer " + v}><Trash /></IconButton>
                                </Cell>
                                <Cell>{v}</Cell>
                                <Cell>avg</Cell>
                              </tr>
                            ))}
                          </tbody>
                        </Table>
                      </Indent>
                    </AccordionBody>
                  </Accordion>
                </Main>
              </Columns>
            </Page>
            <Scrollbar size={57} />
          </Viewport>
        </Browser>

        <Dock>
          <Grain aria-hidden="true">
            <filter id="grain" x="0" y="0" width="100%" height="100%">
              <feTurbulence type="fractalNoise" baseFrequency="0.12 0.2" numOctaves="3" seed="4" />
              <feColorMatrix values="0 0 0 0 0.06  0 0 0 0 0.06  0 0 0 0 0.04  2.5 0 0 0 -0.9" />
            </filter>
            <rect width="100%" height="100%" filter="url(#grain)" />
          </Grain>
          {DOCK.map((d) => (
            <DockItem key={d.name} $active={d.active} aria-label={d.name}>
              {d.icon}
              {d.dots && <Dots $count={d.dots} />}
            </DockItem>
          ))}
          <DockItem $last aria-label="Afficher les applications"><AllApps /></DockItem>
        </Dock>
      </Workspace>
    </Desktop>
  );
}
